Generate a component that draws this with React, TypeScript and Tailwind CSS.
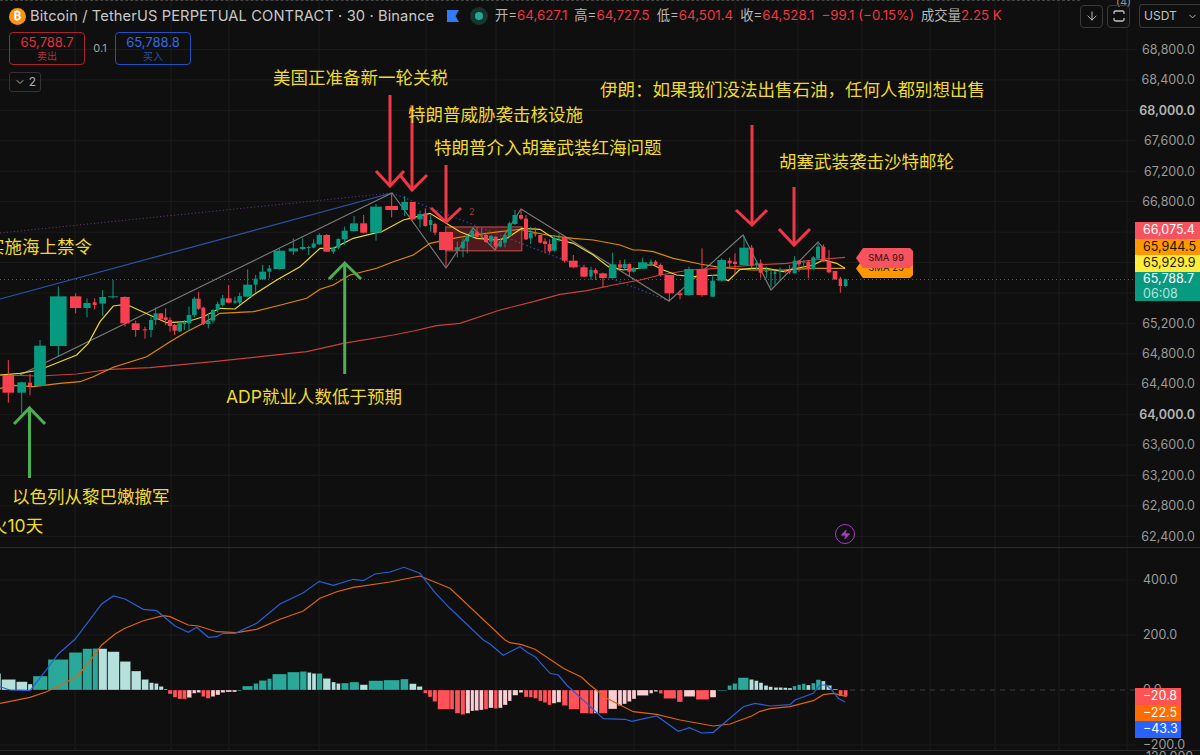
import { ArrowDown, ChevronDown, Zap } from "lucide-react";

type Bar = [number, number, number, number, number, number, "g" | "r"];
type Pt = [number, number];
type Hist = [number, number, number, "t" | "l" | "r" | "p"];

const UP = "#089981";
const DOWN = "#f7404f";

// candles as traced: centre x, width, body top, body bottom, wick top, wick bottom
const leftBars: Bar[] = [
  [25, 35, 525, 578, 480, 608, "r"], [65, 26, 547, 578, 545, 640, "g"], [90, 12, 548, 558, 522, 586, "r"],
  [120, 35, 437, 558, 420, 558, "g"], [175, 50, 289, 438, 260, 468, "g"], [227, 34, 289, 324, 280, 340, "r"],
  [261, 22, 309, 324, 295, 352, "g"], [284, 12, 307, 315, 295, 328, "r"], [308, 20, 291, 311, 270, 348, "g"],
  [339, 29, 289, 292, 240, 296, "g"], [375, 28, 291, 370, 289, 380, "r"], [407, 24, 370, 390, 362, 410, "r"],
  [435, 14, 388, 390, 380, 416, "r"], [453, 12, 360, 390, 350, 412, "g"], [467, 13, 340, 360, 322, 375, "g"],
  [482, 14, 340, 358, 340, 362, "r"], [497, 12, 352, 360, 325, 375, "r"], [510, 13, 360, 378, 352, 395, "r"],
  [524, 13, 375, 392, 372, 405, "r"], [539, 14, 370, 394, 366, 396, "g"], [553, 10, 368, 372, 360, 390, "g"],
  [567, 14, 345, 370, 320, 392, "g"], [583, 14, 296, 345, 290, 352, "g"], [596, 12, 296, 326, 275, 330, "r"],
  [610, 12, 323, 372, 320, 375, "r"], [625, 13, 362, 372, 340, 385, "g"], [639, 12, 330, 362, 328, 370, "g"],
  [653, 12, 312, 330, 305, 338, "g"], [668, 13, 295, 315, 285, 320, "g"], [686, 18, 295, 308, 255, 310, "r"],
  [705, 10, 302, 308, 290, 312, "g"], [719, 13, 288, 308, 278, 315, "g"], [743, 27, 254, 290, 208, 292, "g"],
  [767, 12, 236, 254, 225, 278, "g"], [788, 20, 215, 238, 195, 240, "g"], [808, 12, 205, 215, 195, 235, "g"],
  [838, 35, 152, 207, 145, 208, "g"], [880, 28, 145, 154, 115, 165, "g"], [908, 17, 141, 147, 115, 150, "g"],
  [926, 12, 141, 143, 138, 165, "g"], [941, 12, 130, 143, 118, 145, "g"], [958, 16, 105, 133, 100, 135, "g"],
  [980, 20, 105, 155, 102, 155, "r"], [1000, 12, 143, 155, 140, 162, "g"], [1015, 12, 117, 143, 115, 147, "g"],
  [1034, 18, 92, 118, 80, 135, "g"], [1062, 24, 70, 93, 48, 95, "g"], [1091, 21, 70, 98, 45, 100, "r"],
  [1128, 35, 20, 98, 12, 122, "g"],
];

const midBars: Bar[] = [
  [95, 38, 108, 120, 70, 142, "r"], [134, 20, 96, 120, 78, 138, "g"], [158, 18, 96, 148, 96, 150, "r"],
  [180, 16, 132, 148, 122, 172, "g"], [196, 12, 130, 168, 115, 170, "r"], [212, 10, 150, 165, 135, 185, "g"],
  [225, 11, 162, 188, 158, 195, "r"], [258, 42, 186, 240, 186, 290, "r"], [292, 15, 232, 240, 215, 262, "g"],
  [309, 11, 215, 235, 205, 262, "g"], [322, 11, 198, 215, 195, 250, "g"], [337, 11, 182, 200, 175, 205, "g"],
  [351, 11, 185, 200, 172, 205, "r"], [365, 10, 195, 198, 175, 205, "g"], [378, 12, 195, 216, 190, 218, "r"],
  [393, 12, 198, 215, 195, 225, "g"], [407, 12, 200, 230, 200, 240, "r"], [421, 10, 213, 230, 205, 232, "g"],
  [435, 11, 195, 218, 190, 232, "g"], [449, 12, 160, 198, 155, 200, "g"], [465, 15, 135, 162, 120, 165, "g"],
  [483, 12, 135, 146, 118, 150, "r"], [498, 12, 146, 208, 135, 210, "r"], [512, 12, 188, 205, 170, 222, "g"],
  [526, 12, 190, 193, 172, 200, "r"], [541, 12, 195, 218, 195, 220, "r"], [555, 12, 214, 222, 205, 248, "r"],
  [569, 12, 222, 244, 208, 250, "r"], [583, 14, 205, 242, 195, 245, "g"], [597, 10, 202, 205, 190, 215, "g"],
  [614, 18, 202, 272, 200, 278, "r"], [640, 26, 272, 292, 255, 295, "r"], [672, 22, 292, 320, 284, 322, "r"],
  [693, 10, 300, 320, 290, 330, "g"], [707, 12, 300, 310, 295, 330, "r"], [729, 23, 310, 324, 308, 352, "r"],
  [758, 23, 283, 324, 248, 325, "g"], [780, 12, 283, 293, 270, 296, "r"], [794, 12, 282, 294, 268, 298, "g"],
  [808, 12, 282, 305, 280, 320, "r"], [821, 13, 295, 305, 292, 308, "g"], [848, 28, 277, 296, 263, 297, "g"],
  [873, 10, 275, 282, 268, 285, "g"],
];

const rightBars: Bar[] = [
  [47, 11, 155, 165, 150, 170, "r"], [62, 13, 165, 195, 160, 200, "r"], [88, 29, 195, 250, 195, 275, "r"],
  [120, 14, 250, 255, 240, 268, "r"], [147, 28, 177, 255, 170, 258, "g"], [186, 33, 177, 255, 115, 260, "r"],
  [218, 14, 212, 260, 195, 260, "g"], [245, 26, 150, 212, 145, 215, "g"], [269, 12, 152, 160, 143, 172, "r"],
  [285, 12, 155, 162, 130, 195, "r"], [312, 28, 113, 165, 78, 165, "g"], [335, 12, 113, 167, 105, 175, "r"],
  [350, 10, 158, 165, 150, 180, "g"], [362, 12, 160, 188, 148, 205, "r"], [379, 8, 183, 185, 170, 205, "g"],
  [393, 6, 188, 190, 175, 232, "g"], [405, 8, 185, 192, 183, 225, "g"], [420, 8, 180, 183, 172, 210, "g"],
  [436, 8, 182, 185, 180, 190, "r"], [449, 8, 180, 187, 165, 192, "r"], [464, 12, 152, 190, 138, 190, "g"],
  [477, 12, 152, 163, 150, 185, "r"], [491, 10, 155, 158, 150, 180, "g"], [505, 12, 155, 178, 150, 205, "r"],
  [520, 12, 142, 178, 138, 178, "g"], [534, 12, 110, 146, 95, 148, "g"], [550, 12, 110, 155, 103, 155, "r"],
  [567, 14, 155, 187, 120, 190, "r"], [585, 14, 183, 208, 183, 210, "r"], [601, 10, 206, 228, 200, 248, "r"],
  [617, 11, 208, 228, 206, 232, "g"],
];

const place = (bars: Bar[], ox: number, oy: number): Bar[] =>
  bars.map(([x, w, a, b, c, d, s]) => [x / 3 + ox, w / 3, a / 3 + oy, b / 3 + oy, c / 3 + oy, d / 3 + oy, s]);

const bars = [...place(leftBars, 0, 200), ...place(midBars, 360, 170), ...place(rightBars, 640, 210)];

const at = (pts: Pt[], ox: number, oy: number) => pts.map(([x, y]) => `${(x / 3 + ox).toFixed(1)},${(y / 3 + oy).toFixed(1)}`).join(" ");

const sma7 =
  at([[0, 525], [60, 520], [118, 510], [230, 465], [265, 430], [300, 365], [340, 318], [360, 315], [390, 318], [470, 355], [500, 368], [560, 365], [610, 350], [660, 325], [705, 327], [760, 285], [830, 240], [900, 200], [960, 145], [1000, 145], [1060, 115], [1130, 98]], 0, 200) +
  " " +
  at([[65, 185], [130, 150], [150, 145], [210, 130], [300, 185], [350, 205], [410, 210], [440, 205], [485, 175], [540, 178], [580, 205], [640, 220], [700, 255], [745, 290], [790, 300], [840, 295]], 360, 170) +
  " " +
  at([[0, 165], [40, 165], [70, 180], [110, 195], [160, 200], [230, 195], [265, 212], [300, 178], [335, 175], [380, 175], [430, 185], [470, 175], [520, 165], [550, 150], [590, 160], [615, 175]], 640, 210);

const sma25 =
  at([[0, 565], [40, 556], [100, 560], [180, 550], [240, 545], [280, 530], [340, 502], [440, 470], [510, 425], [560, 395], [610, 370], [660, 340], [760, 335], [830, 318], [920, 295], [960, 268], [1000, 255], [1050, 225], [1130, 205]], 0, 200) +
  " " +
  at([[100, 275], [160, 255], [210, 220], [280, 205], [340, 195], [420, 185], [480, 178], [560, 195], [640, 205], [700, 210], [780, 225], [820, 240]], 360, 170) +
  " " +
  at([[0, 120], [40, 125], [100, 145], [180, 162], [240, 172], [335, 180], [430, 180], [520, 175], [615, 175]], 640, 210);

const sma99 =
  at([[0, 525], [120, 528], [230, 522], [330, 508], [450, 503], [640, 485], [780, 470], [920, 455], [1030, 430]], 0, 200) +
  " " +
  at([[100, 495], [160, 483], [230, 467], [300, 460], [420, 420], [520, 395], [600, 373], [680, 362], [760, 345]], 360, 170) +
  " " +
  at([[0, 210], [60, 195], [150, 180], [230, 175], [340, 165], [440, 160], [520, 150], [615, 142]], 640, 210);

const macdBlue =
  at([[0, 410], [30, 420], [90, 422], [140, 358], [175, 312], [225, 268], [305, 162], [340, 138], [375, 147], [430, 178], [470, 182], [525, 228], [565, 247], [590, 232], [625, 262], [650, 260], [670, 250], [705, 250], [770, 220], [840, 162], [910, 128], [958, 94], [1000, 106], [1060, 88], [1090, 92], [1125, 72], [1170, 66], [1212, 52], [1260, 70], [1305, 128], [1350, 175]], 0, 550) +
  " " +
  at([[100, 0], [120, 12], [160, 46], [210, 20], [230, 36], [255, 50], [300, 100], [325, 105], [350, 135], [460, 236], [525, 238], [545, 244], [620, 228], [685, 274], [718, 263], [755, 279], [790, 277], [880, 200], [915, 190], [960, 198], [1020, 194], [1035, 180], [1090, 160], [1110, 135], [1130, 135], [1145, 150], [1165, 175], [1185, 186]], 450, 640);

const macdOrange =
  at([[0, 460], [90, 442], [140, 425], [230, 380], [265, 340], [305, 285], [345, 252], [375, 235], [430, 212], [490, 197], [510, 200], [565, 225], [595, 228], [650, 245], [710, 248], [770, 238], [840, 208], [910, 183], [960, 145], [1010, 125], [1060, 112], [1170, 96], [1260, 78], [1350, 115]], 0, 550) +
  " " +
  at([[165, 0], [180, 8], [215, 14], [255, 28], [340, 85], [395, 112], [420, 135], [470, 175], [550, 215], [620, 223], [690, 240], [790, 258], [840, 252], [905, 228], [930, 214], [960, 206], [1020, 200], [1090, 182], [1120, 164], [1150, 160], [1190, 170]], 450, 640);

const histLeft: Hist[] = [
  [0, 3, 370, "l"], [5, 47, 388, "l"], [49, 82, 395, "l"], [84, 97, 402, "l"], [99, 142, 378, "t"], [144, 205, 328, "t"], [207, 246, 307, "t"], [248, 276, 296, "t"], [278, 294, 295, "t"],
  [296, 321, 296, "l"], [323, 358, 305, "l"], [360, 392, 334, "l"], [394, 423, 363, "l"], [425, 446, 388, "l"], [448, 461, 398, "l"], [463, 475, 400, "l"], [477, 490, 409, "l"], [492, 502, 417, "l"],
  [504, 517, 432, "r"], [519, 531, 442, "r"], [533, 546, 447, "r"], [547, 560, 447, "r"], [561, 575, 443, "p"], [577, 588, 430, "p"], [590, 602, 428, "p"], [604, 616, 440, "r"], [618, 631, 445, "r"],
  [633, 645, 440, "p"], [647, 660, 435, "p"], [662, 675, 428, "p"], [677, 695, 426, "p"], [697, 710, 426, "p"], [712, 724, 423, "t"], [727, 758, 408, "t"], [761, 775, 400, "t"], [777, 800, 391, "t"],
  [802, 815, 386, "t"], [817, 860, 372, "t"], [862, 898, 366, "t"], [900, 920, 364, "t"], [922, 934, 367, "l"], [936, 948, 370, "l"], [950, 967, 370, "t"], [969, 992, 385, "l"], [995, 1007, 396, "l"],
  [1009, 1021, 400, "l"], [1024, 1046, 399, "t"], [1049, 1077, 396, "t"], [1080, 1103, 404, "l"], [1106, 1149, 392, "t"], [1151, 1198, 390, "t"], [1201, 1225, 387, "t"], [1228, 1249, 401, "l"],
  [1251, 1267, 409, "l"], [1270, 1282, 430, "r"], [1284, 1296, 441, "r"], [1298, 1311, 455, "r"], [1313, 1350, 478, "r"],
];

const histRight: Hist[] = [
  [0, 12, 208, "r"], [15, 30, 220, "r"], [32, 45, 224, "r"], [47, 60, 220, "p"], [62, 72, 213, "p"], [74, 86, 212, "p"], [88, 100, 210, "p"], [102, 114, 208, "r"], [116, 130, 204, "p"], [132, 143, 206, "r"],
  [145, 157, 204, "p"], [159, 172, 195, "p"], [174, 185, 183, "p"], [188, 204, 166, "p"], [207, 219, 158, "p"], [222, 235, 171, "r"], [237, 248, 172, "r"], [250, 263, 175, "r"], [265, 277, 183, "r"],
  [279, 291, 188, "r"], [293, 304, 195, "r"], [306, 318, 190, "p"], [320, 333, 187, "p"], [336, 353, 197, "r"], [356, 388, 208, "r"], [390, 416, 220, "r"], [418, 430, 221, "r"], [432, 444, 220, "p"],
  [447, 472, 220, "r"], [475, 501, 207, "p"], [504, 516, 197, "p"], [518, 530, 192, "p"], [532, 544, 185, "p"], [546, 558, 177, "p"], [561, 595, 167, "p"], [598, 609, 160, "p"], [612, 623, 155, "p"],
  [627, 638, 161, "r"], [641, 678, 176, "r"], [681, 698, 186, "r"], [702, 735, 170, "p"], [738, 777, 179, "r"], [780, 798, 172, "p"], [802, 830, 152, "t"], [833, 845, 136, "t"], [848, 861, 130, "t"],
  [864, 896, 113, "t"], [898, 911, 118, "l"], [913, 925, 122, "l"], [927, 939, 128, "l"], [942, 954, 136, "l"], [956, 968, 140, "l"], [972, 984, 142, "l"], [986, 998, 142, "l"], [1000, 1012, 143, "l"],
  [1014, 1026, 144, "l"], [1028, 1039, 138, "t"], [1042, 1053, 134, "t"], [1056, 1067, 131, "t"], [1069, 1081, 135, "l"], [1084, 1096, 129, "t"], [1098, 1112, 119, "t"], [1114, 1126, 123, "l"],
  [1129, 1145, 136, "l"], [1148, 1163, 147, "l"], [1166, 1178, 168, "r"], [1181, 1193, 168, "r"],
];

const histColor = { t: "#2aa899", l: "#b6e0dc", r: "#ff5259", p: "#fdcdd2" };

const vLines = [75, 171, 229, 319, 426, 496, 554, 634, 735, 798, 862, 930, 995, 1059, 1127];
// 66,400 / 66,000 / 65,600 sit behind the price tags, so those rows stay empty
const priceRows = ["68,800.0", "68,400.0", "68,000.0", "67,600.0", "67,200.0", "66,800.0", "", "", "", "65,200.0", "64,800.0", "64,400.0", "64,000.0", "63,600.0", "63,200.0", "62,800.0", "62,400.0"];

const redArrows = [
  [390, 95, 186, 376, 171, 404],
  [412, 105, 190, 400, 175, 427],
  [446, 165, 222, 431, 208, 461],
  [752, 125, 225, 736, 210, 767],
  [794, 187, 245, 779, 229, 810],
];

const notes = [
  { text: "美国正准备新一轮关税", cls: "left-[273px] top-[66px]" },
  { text: "特朗普威胁袭击核设施", cls: "left-[408px] top-[103px]" },
  { text: "特朗普介入胡塞武装红海问题", cls: "left-[434px] top-[136px]" },
  { text: "伊朗：如果我们没法出售石油，任何人都别想出售", cls: "left-[600px] top-[78px]" },
  { text: "胡塞武装袭击沙特邮轮", cls: "left-[779px] top-[150px]" },
  { text: "实施海上禁令", cls: "left-[-13px] top-[235px]" },
  { text: "ADP就业人数低于预期", cls: "left-[226px] top-[385px]" },
  { text: "以色列从黎巴嫩撤军", cls: "left-[12px] top-[485px]" },
  { text: "火10天", cls: "left-[-10px] top-[514px]" },
];

function Legend() {
  return (
    <div className="absolute left-0 top-0 z-10 w-full">
      <div className="flex h-[32px] items-center pl-[9px]">
        <svg width="17" height="17" viewBox="0 0 15 15" className="mr-[4px]">
          <circle cx="7.5" cy="7.5" r="7.5" fill="#f7931a" />
          <text x="7.5" y="11" textAnchor="middle" fontSize="10" fontWeight="700" fill="#fff">₿</text>
        </svg>
        <span className="w-[417px] whitespace-nowrap text-[14.7px] tracking-[0.1px] text-[#c8c8c8]">Bitcoin / TetherUS PERPETUAL CONTRACT · 30 · Binance</span>
        <svg width="12" height="12" viewBox="0 0 12 12">
          <path d="M0 0H12L8.5 6L12 12H0Z" fill="#2f7cf6" />
        </svg>
        <div className="ml-[11px] mr-[7px] flex h-[18px] w-[18px] items-center justify-center rounded-full bg-[#17342f]">
          <div className="h-[8px] w-[8px] rounded-full bg-[#22ab94]" />
        </div>
        <div className="flex gap-[7px] whitespace-nowrap text-[13.3px] text-[#f23645]">
          <span><span className="text-[#b8b8b8]">开=</span>64,627.1</span>
          <span><span className="text-[#b8b8b8]">高=</span>64,727.5</span>
          <span><span className="text-[#b8b8b8]">低=</span>64,501.4</span>
          <span><span className="text-[#b8b8b8]">收=</span>64,528.1</span>
          <span>−99.1 (−0.15%)</span>
          <span><span className="text-[#b8b8b8]">成交量</span>2.25 K</span>
        </div>
      </div>
      <div className="flex items-center pl-[9px]">
        <div className="flex h-[33px] w-[76px] flex-col items-center justify-center rounded-[4px] border border-[#a8232f] leading-none text-[#e0313d]">
          <span className="text-[13px]">65,788.7</span>
          <span className="mt-[2px] text-[10px] text-[#a8323a]">卖出</span>
        </div>
        <span className="w-[30px] text-center text-[11px] text-[#a0a0a0]">0.1</span>
        <div className="flex h-[33px] w-[76px] flex-col items-center justify-center rounded-[4px] border border-[#1f50c4] leading-none text-[#2f6bea]">
          <span className="text-[13px]">65,788.8</span>
          <span className="mt-[2px] text-[10px] text-[#2450a8]">买入</span>
        </div>
      </div>
      <div className="ml-[9px] mt-[7px] flex h-[20px] w-[32px] items-center justify-center gap-[3px] rounded-[3px] border border-[#333] text-[12px] text-[#b0b0b0]">
        <ChevronDown size={12} strokeWidth={2} />
        <span>2</span>
      </div>
    </div>
  );
}

function TopRight() {
  return (
    <div className="absolute right-0 top-[4px] z-10 flex items-center gap-[4px]">
      <div className="flex h-[23px] w-[23px] items-center justify-center rounded-[4px] border border-[#3a3a3a] text-[#c4c4c4]">
        <ArrowDown size={14} strokeWidth={1.6} />
      </div>
      <div className="flex h-[23px] w-[23px] items-center justify-center rounded-[4px] border border-[#3a3a3a]">
        <svg width="14" height="14" viewBox="0 0 14 14" fill="none" stroke="#c4c4c4" strokeWidth="1.3">
          <path d="M2 5V3.5A1.5 1.5 0 0 1 3.5 2H10.5A1.5 1.5 0 0 1 12 3.5V5M2 9V10.5A1.5 1.5 0 0 0 3.5 12H10.5A1.5 1.5 0 0 0 12 10.5V9" />
        </svg>
      </div>
      <div className="ml-[5px] flex h-[24px] w-[61px] items-center justify-between rounded-l-[4px] border border-r-0 border-[#3a3a3a] pl-[4px] pr-[2px] text-[12px] text-[#c4c4c4]">
        <span>USDT</span>
        <ChevronDown size={11} strokeWidth={2} />
      </div>
    </div>
  );
}

function PriceChart() {
  return (
    <svg viewBox="0 0 1135 547" className="block h-full w-full">
      {vLines.map((x) => (
        <line key={x} x1={x} x2={x} y1="0" y2="547" stroke="#1c1c1c" />
      ))}
      {priceRows.map((_, i) => (
        <line key={i} x1="0" x2="1135" y1={49.5 + i * 30.43} y2={49.5 + i * 30.43} stroke="#1a1a1a" />
      ))}
      <line x1="0" x2="1135" y1="279.5" y2="279.5" stroke="#1c7a68" strokeDasharray="1 3" />
      <line x1="0" y1="233" x2="392" y2="193" stroke="#6f3a8c" strokeDasharray="1 2.5" />
      <line x1="0" y1="299" x2="392" y2="193" stroke="#2a55a8" strokeWidth="1.2" />
      <polyline points="392,193 669,301" fill="none" stroke="#2a4a9a" strokeDasharray="1.5 2.5" strokeWidth="1.2" />
      <rect x="445.7" y="227" width="76" height="23.7" fill="#f23645" fillOpacity="0.28" stroke="#96403f" strokeWidth="1.5" />
      <polyline points="20,375 392,193 446,268 473,228 495,250 521,209 669,301 743,235 771,290 818,242 825,250" fill="none" stroke="#7b7b7b" strokeWidth="1.1" />
      <polyline points={sma99} fill="none" stroke="#c8403f" strokeWidth="1.2" />
      <polyline points={sma25} fill="none" stroke="#e08a00" strokeWidth="1.2" />
      <polyline points={sma7} fill="none" stroke="#e9d82c" strokeWidth="1.2" />
      {bars.map(([x, w, top, bottom, hi, lo, s], i) => (
        <g key={i} fill={s === "g" ? UP : DOWN} stroke={s === "g" ? UP : DOWN}>
          <line x1={x} x2={x} y1={hi} y2={lo} strokeWidth="1" />
          <rect x={x - w / 2} y={top} width={w} height={Math.max(bottom - top, 1)} stroke="none" />
        </g>
      ))}
      {redArrows.map(([x, top, tip, l, headY, r]) => (
        <g key={x} fill="none" stroke="#f23645" strokeWidth="3">
          <line x1={x} x2={x} y1={top} y2={tip} />
          <polyline points={`${l},${headY} ${x},${tip} ${r},${headY}`} />
        </g>
      ))}
      <g fill="none" stroke="#4caf50" strokeWidth="3">
        <line x1="29.5" x2="29.5" y1="478" y2="408" />
        <polyline points="14,424 29.5,408 45,424" />
        <line x1="344.7" x2="344.7" y1="374" y2="263" />
        <polyline points="329,279 344.7,263 361,279" />
      </g>
    </svg>
  );
}

function Histogram({ rows, ox, oy }: { rows: Hist[]; ox: number; oy: number }) {
  return (
    <>
      {rows.map(([a, b, v, c], i) => {
        const y = v / 3 + oy;
        return (
          <rect
            key={i}
            x={a / 3 + ox}
            y={Math.min(y, 690)}
            width={Math.max((b - a) / 3, 1)}
            height={Math.abs(y - 690)}
            fill={histColor[c]}
            stroke="#0f0f0f"
            strokeOpacity="0.6"
            strokeWidth="0.5"
          />
        );
      })}
    </>
  );
}

function MacdChart() {
  return (
    <svg viewBox="0 548 1135 202" className="block h-full w-full">
      {vLines.map((x) => (
        <line key={x} x1={x} x2={x} y1="548" y2="750" stroke="#1c1c1c" />
      ))}
      {[580, 635, 745].map((y) => (
        <line key={y} x1="0" x2="1135" y1={y} y2={y} stroke="#1a1a1a" />
      ))}
      <line x1="850" x2="1135" y1="690" y2="690" stroke="#3c3c3c" strokeDasharray="5 5" />
      <Histogram rows={histLeft} ox={0} oy={550} />
      <Histogram rows={histRight} ox={450} oy={640} />
      <polyline points={macdOrange} fill="none" stroke="#e0640a" strokeWidth="1.2" />
      <polyline points={macdBlue} fill="none" stroke="#2a5fd8" strokeWidth="1.2" />
    </svg>
  );
}

function PriceTags() {
  return (
    <div className="absolute left-[1135px] top-[222px] z-10 w-[65px] text-[12.5px] leading-none">
      <div className="flex h-[16.5px] items-center pl-[8px] text-white bg-[#f7525f]">66,075.4</div>
      <div className="flex h-[16.5px] items-center pl-[8px] text-[#1a1200] bg-[#ff9800]">65,944.5</div>
      <div className="flex h-[17px] items-center pl-[8px] text-[#1a1a00] bg-[#ffeb3b]">65,929.9</div>
      <div className="flex h-[29px] flex-col justify-center gap-[3px] pl-[8px] text-white bg-[#089981]">
        <span>65,788.7</span>
        <span className="text-[#b5e2da]">06:08</span>
      </div>
    </div>
  );
}

function SmaTags() {
  return (
    <div className="absolute left-[856px] top-[248px] z-10 text-[9.5px] leading-none text-[#311]">
      <div className="absolute left-0 top-[11px] flex h-[19px] w-[57px] items-start justify-center bg-[#ff9800] pl-[3px] pt-[4px] [clip-path:polygon(7px_0,100%_0,100%_calc(100%-3px),calc(100%-3px)_100%,7px_100%,0_50%)]">
        SMA 25
      </div>
      <div className="relative flex h-[20px] w-[57px] items-center justify-center bg-[#f7525f] pl-[3px] [clip-path:polygon(7px_0,calc(100%-3px)_0,100%_3px,100%_calc(100%-3px),calc(100%-3px)_100%,7px_100%,0_50%)]">
        SMA 99
      </div>
    </div>
  );
}

export default function App() {
  return (
    <div
      className="relative h-[755px] w-[1200px] overflow-hidden bg-[#0f0f0f]"
      style={{ fontFamily: 'Inter, "Noto Sans CJK SC", sans-serif' }}
    >
      <div className="flex h-[548px] border-b border-[#2b2b2b]">
        <div className="relative w-[1135px]">
          <PriceChart />
        </div>
        <div className="flex w-[65px] flex-col pt-[35px] text-[12.5px] text-[#9a9a9a]">
          {priceRows.map((p, i) => (
            <div key={i} className={`flex h-[30.43px] shrink-0 items-center justify-end pr-[5px] ${p === "68,000.0" || p === "64,000.0" ? "font-semibold text-[#b4b4b4]" : ""}`}>
              {p}
            </div>
          ))}
        </div>
      </div>
      <div className="flex h-[203px] border-b border-[#2b2b2b]">
        <div className="w-[1135px] overflow-hidden">
          <MacdChart />
        </div>
        <div className="flex w-[65px] flex-col pl-[8px] pt-[23px] text-[12.5px] text-[#9a9a9a]">
          <div className="flex h-[18px] items-center">400.0</div>
          <div className="mt-[37px] flex h-[18px] items-center">200.0</div>
          <div className="mt-[37px] flex h-[18px] items-center">0.0</div>
          <div className="mt-[37px] flex h-[18px] items-center">−200.0</div>
        </div>
      </div>
      <div className="pl-[1146px] text-[12.5px] leading-none text-[#9a9a9a]">120,000</div>

      <Legend />
      <TopRight />
      <div className="absolute left-[1116px] top-[-6px] text-[11px] text-[#9a9a9a]">(4)</div>
      <div className="absolute left-0 top-0 h-px w-[1080px] border-t border-dashed border-[#444]" />

      {notes.map((n) => (
        <span key={n.text} className={`absolute whitespace-nowrap text-[17.5px] leading-[24px] text-[#eedb2e] ${n.cls}`}>
          {n.text}
        </span>
      ))}
      <span className="absolute left-[469px] top-[205px] text-[9px] text-[#a83a3a]">2</span>

      <SmaTags />
      <PriceTags />

      <div className="absolute left-[1135px] top-[688px] z-10 w-[46px] text-[12.5px] leading-none text-white">
        <div className="flex h-[16.5px] items-center pl-[8px] bg-[#ff5252]">−20.8</div>
        <div className="flex h-[16.5px] items-center pl-[8px] bg-[#ff6d00]">−22.5</div>
        <div className="flex h-[16.5px] items-center pl-[8px] bg-[#2962ff]">−43.3</div>
      </div>

      <div className="absolute left-[835px] top-[524px] flex h-[20px] w-[20px] items-center justify-center rounded-full border-[1.5px] border-[#a43cc0] text-[#a43cc0]">
        <Zap size={11} fill="currentColor" strokeWidth={1} />
      </div>
    </div>
  );
}
